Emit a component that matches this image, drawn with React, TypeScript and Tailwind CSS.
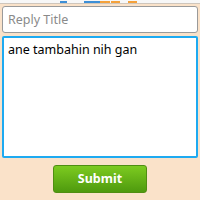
import { useState } from 'react';

export default function App() {
  const [title, setTitle] = useState('');
  const [body, setBody] = useState('ane tambahin nih gan');

  return (
    <div className="w-[200px] h-[200px] overflow-hidden bg-[#fae2c9] flex flex-col" style={{ fontFamily: '"Noto Sans", "Open Sans", "DejaVu Sans", sans-serif' }}>
      {/* toolbar remnant */}
      <div className="h-[3px] bg-[#f7f7f7] flex items-end shrink-0">
        <div className="ml-[60px] w-[7px] h-[2px] bg-[#3d8fd6]" />
        <div className="ml-[17px] w-[16px] h-[2px] bg-[#3d8fd6]" />
        <div className="w-[10px] h-[2px] bg-[#f5a13a]" />
        <div className="ml-[1px] w-[9px] h-[2px] bg-[#f5a13a]" />
        <div className="ml-[8px] w-[9px] h-[2px] bg-[#f5a13a]" />
      </div>
      <div className="h-px bg-[#cfc6bc] shrink-0" />

      <div className="flex flex-col px-[2px] pt-[2px] gap-[3px]">
        <input
          value={title}
          onChange={(e) => setTitle(e.target.value)}
          placeholder="Reply Title"
          className="h-[27px] w-full bg-white border border-[#9a9a9a] rounded-[3px] px-[5px] text-[12.5px] text-[#333] placeholder:text-[#8a8a8a] outline-none"
        />
        <textarea
          value={body}
          onChange={(e) => setBody(e.target.value)}
          className="h-[122px] w-full bg-white border-2 border-[#1eaaf1] rounded-[2px] px-[4px] pt-[3px] text-[12.5px] text-black resize-none outline-none"
        />
      </div>

      <div className="flex justify-center pt-[7px]">
        <button className="w-[94px] h-[28px] rounded-[3px] border border-[#4f8e12] bg-gradient-to-b from-[#7dcb20] to-[#4e9a0e] text-white text-[12.5px] font-bold">
          Submit
        </button>
      </div>
    </div>
  );
}
